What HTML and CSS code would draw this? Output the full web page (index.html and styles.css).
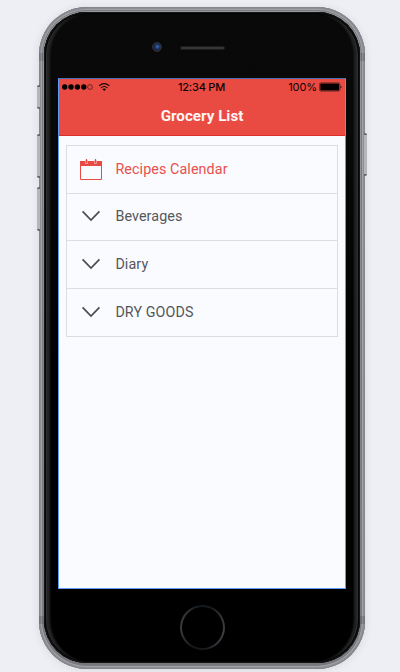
FILE: index.html
```html
<!DOCTYPE html>
<html lang="en">
<head>
<meta charset="utf-8">
<title>Grocery List</title>
<link rel="stylesheet" href="styles.css">
</head>
<body>
<div class="phone">
  <span class="key mute"></span>
  <span class="key volume-up"></span>
  <span class="key volume-down"></span>
  <span class="key power"></span>
  <span class="band top"></span>
  <span class="band bottom"></span>
  <div class="face">
    <div class="earpiece"><span class="camera"></span><span class="speaker"></span></div>
    <main class="screen">
      <header class="header">
        <div class="status">
          <div class="signal">
            <svg width="50" height="12" viewBox="0 0 50 12">
              <circle cx="2.7" cy="6" r="2.7"/><circle cx="9" cy="6" r="2.7"/><circle cx="15.4" cy="6" r="2.7"/><circle cx="21.8" cy="6" r="2.7"/>
              <circle cx="28" cy="6" r="2.4" fill="none" stroke="#35100e" stroke-width=".65"/>
              <g fill="none" stroke="#160504" stroke-width="1.1"><path d="M37 4.9Q42.2 .4 47.4 4.9"/><path d="M39 6.8Q42.2 4.1 45.4 6.8"/></g>
              <path d="M40.4 8.1Q42.2 6.7 44 8.1L42.2 10Z"/>
            </svg>
          </div>
          <div class="time">12:34 PM</div>
          <div class="power-level">100%
            <svg width="23" height="10" viewBox="0 0 23 10"><rect x=".5" y=".8" width="20.4" height="8.4" rx="1.4" fill="none" stroke="#54201d" stroke-width=".7"/><rect x="1.3" y="1.5" width="18.8" height="7" rx=".7"/><path d="M21.5 3.6Q23.4 5 21.5 6.4Z"/></svg>
          </div>
        </div>
        <h1 class="title">Grocery List</h1>
      </header>
      <ul class="list">
        <li class="row accent">
          <svg class="icon" width="24" height="24" viewBox="0 0 24 24"><path d="M1.5 4.5h21v18h-21z"/><path d="M1 4h22v5H1z" fill="#e94b43" stroke="none"/><path d="M7.5 3v3.8M16.5 3v3.8" stroke="#f5b8b6" stroke-width="2.6"/><path d="M7.5 2v4M16.5 2v4" stroke-width="1.2"/></svg>
          <span>Recipes Calendar</span>
        </li>
        <li class="row"><svg class="icon" width="24" height="24" viewBox="0 0 24 24"><path d="M3.6 7.4 12 16l8.4-8.6"/></svg><span>Beverages</span></li>
        <li class="row"><svg class="icon" width="24" height="24" viewBox="0 0 24 24"><path d="M3.6 7.4 12 16l8.4-8.6"/></svg><span>Diary</span></li>
        <li class="row"><svg class="icon" width="24" height="24" viewBox="0 0 24 24"><path d="M3.6 7.4 12 16l8.4-8.6"/></svg><span>DRY GOODS</span></li>
      </ul>
    </main>
    <div class="home"></div>
  </div>
</div>
</body>
</html>
```
FILE: styles.css
```css
* { box-sizing: border-box; }
body {
  margin: 0;
  height: 672px;
  overflow: hidden;
  padding: 6.5px 35px 0 39px;
  background: #eeeff4;
  font-family: Roboto, "Liberation Sans", sans-serif;
}
.phone {
  position: relative;
  width: 326px;
  height: 662.5px;
  padding: 5.5px 5px;
  border-radius: 48px;
  background: linear-gradient(#999ba0, #85868b 50%, #77777c);
  box-shadow: inset 0 0 0 1px #84868b, inset 0 0 0 2px #8c8e94, inset 0 0 0 3px #a0a2a7, inset 0 0 0 4px #797b80, 0 1px 9px rgba(70, 75, 95, .14);
}
.face {
  position: relative;
  display: flex;
  flex-direction: column;
  align-items: center;
  height: 651px;
  border-radius: 43px;
  background: linear-gradient(#090909, #080808 20%, #000 60%);
  box-shadow: inset 0 0 0 1px #151515, inset 0 0 0 2px #050505, inset 3px 0 1px #303132, inset -3px 0 1px #303132, inset 6px 0 2px #222323, inset -6px 0 2px #222323;
}
.earpiece {
  flex: none;
  display: flex;
  align-items: center;
  align-self: stretch;
  height: 66px;
  padding: 4px 0 0 108px;
}
.camera {
  width: 10px;
  height: 10px;
  border: 1.5px solid #303236;
  border-radius: 50%;
  background: radial-gradient(circle at 55% 45%, #385890 0 1px, #172e65 2.5px, #20242d 4px);
}
.speaker {
  width: 45px;
  height: 4px;
  margin: 1px 0 0 18px;
  border: 1px solid #1c1c1c;
  border-radius: 2px;
  background: #363636;
}
.screen {
  flex: none;
  width: 288px;
  height: 511px;
  border: 1px solid #5d9afa;
  border-top-color: #4a6fb3;
  background: #f9fbff;
}
.header {
  height: 57px;
  border-bottom: 1px solid #dc3029;
  background: #e94b43;
}
.status {
  display: grid;
  grid-template-columns: 1fr auto 1fr;
  align-items: center;
  height: 16px;
  padding: 0 3px;
  font: 500 11px/16px Inter, "Liberation Sans", sans-serif;
  letter-spacing: -.3px;
  color: #100302;
}
.status svg { display: block; fill: #050000; }
.time { margin-left: -1px; letter-spacing: -.22px; }
.power-level {
  display: flex;
  align-items: center;
  justify-content: flex-end;
  gap: 2px;
  font-weight: 400;
  letter-spacing: -.1px;
}
.title {
  margin: 0;
  padding-top: 10px;
  color: #fff5f5;
  font-size: 15.2px;
  line-height: 22px;
  font-weight: 700;
  text-align: center;
}
.list {
  margin: 9px 7px 0;
  padding: 0;
  list-style: none;
  border: 1px solid #dcdde3;
}
.row {
  display: flex;
  align-items: center;
  gap: 12.4px;
  height: 47.7px;
  padding: 0 0 1.4px 12px;
  border-bottom: 1px solid #dcdde3;
  color: #55565a;
  font-size: 14.3px;
  letter-spacing: .1px;
}
.row:last-child { height: 46.9px; border-bottom: 0; }
.row.accent { padding-bottom: 0; }
.accent { color: #e8504b; }
.icon { flex: none; fill: none; stroke: #4b4c50; stroke-width: 1.7; }
.accent .icon { stroke: #e94b43; stroke-width: 1; }
.home {
  flex: none;
  width: 45px;
  height: 45px;
  margin-top: 16px;
  border: 2px solid transparent;
  border-radius: 50%;
  background: linear-gradient(#000, #000) padding-box, linear-gradient(100deg, #45464b, #15191b 35%, #15191b 60%, #48484d) border-box;
}
.key {
  position: absolute;
  left: -2px;
  width: 3px;
  border: solid #66676b;
  border-width: 2px 0;
  border-radius: 2px 0 0 2px;
  background: #b5b6bb;
}
.mute { top: 78px; height: 24px; }
.volume-up { top: 127px; height: 44px; }
.volume-down { top: 180px; height: 44px; }
.power { left: auto; right: -2px; top: 126px; height: 43px; border-radius: 0 2px 2px 0; }
.band {
  position: absolute;
  left: 0;
  right: 0;
  height: 8px;
  background: rgba(65, 66, 70, .25);
}
.band.top { top: 46px; }
.band.bottom { top: 609px; }
```
